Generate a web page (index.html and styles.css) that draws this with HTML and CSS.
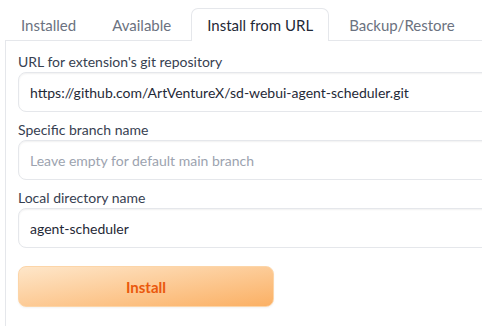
FILE: index.html
```html
<!DOCTYPE html>
<html>
<head>
<meta charset="utf-8">
<link rel="stylesheet" href="styles.css">
</head>
<body>
<div class="tabs">
  <div class="tab-nav">
    <button class="tab">Installed</button>
    <button class="tab">Available</button>
    <button class="tab selected">Install from URL</button>
    <button class="tab">Backup/Restore</button>
  </div>
  <div class="panel">
    <label class="field">
      <span class="label">URL for extension's git repository</span>
      <input class="input" type="text" value="https://github.com/ArtVentureX/sd-webui-agent-scheduler.git">
    </label>
    <label class="field">
      <span class="label">Specific branch name</span>
      <input class="input" type="text" placeholder="Leave empty for default main branch">
    </label>
    <label class="field">
      <span class="label">Local directory name</span>
      <input class="input" type="text" value="agent-scheduler">
    </label>
    <button class="install">Install</button>
  </div>
</div>
</body>
</html>
```
FILE: styles.css
```css
html, body {
  margin: 0;
  padding: 0;
  background: #ffffff;
}
body {
  font-family: Lato, "Noto Sans", sans-serif;
  height: 326px;
  overflow: hidden;
}
.tabs {
  padding: 8px 0 0 5px;
  overflow: hidden;
  height: 326px;
  box-sizing: border-box;
}
.tab-nav {
  display: flex;
  gap: 4px;
  height: 32px;
  position: relative;
  z-index: 1;
}
.tab {
  font-family: inherit;
  font-size: 15px;
  color: #6b7280;
  background: transparent;
  border: 1px solid transparent;
  border-bottom: none;
  border-radius: 7px 7px 0 0;
  padding: 0 15px;
  height: 33px;
  margin: 0;
  line-height: 32px;
  white-space: nowrap;
}
.tab.selected {
  color: #1f2937;
  background: #ffffff;
  border-color: #e5e7eb;
}
.panel {
  width: calc(100% + 30px);
  box-sizing: border-box;
  border: 1px solid #e5e7eb;
  border-right: none;
  padding: 11px 0 40px 12px;
  display: flex;
  flex-direction: column;
  gap: 8px;
}
.field {
  display: flex;
  flex-direction: column;
}
.label {
  font-size: 14px;
  line-height: 19px;
  color: #374151;
  margin-bottom: 1px;
}
.input {
  font-family: inherit;
  font-size: 14px;
  color: #1f2937;
  height: 40px;
  box-sizing: border-box;
  border: 1px solid #e5e7eb;
  border-radius: 8px;
  padding: 0 11px;
  background: #ffffff;
  box-shadow: inset 0 1px 2px rgba(0,0,0,0.06);
  width: 100%;
  outline: none;
}
.input::placeholder {
  color: #9ca3af;
}
.install {
  margin-top: 10px;
  width: 256px;
  height: 41px;
  border: 1px solid #fcd5a8;
  border-radius: 8px;
  background: linear-gradient(to bottom right, #fee6c9, #fbb064);
  color: #ea580c;
  font-family: inherit;
  font-size: 15px;
  font-weight: 700;
  box-shadow: 0 1px 2px rgba(0,0,0,0.05);
}
```
